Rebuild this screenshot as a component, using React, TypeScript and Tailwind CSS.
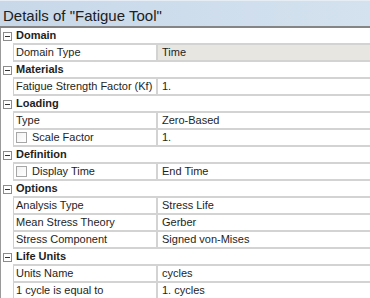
import React from 'react'

type Row =
  | { kind: 'cat'; label: string }
  | { kind: 'prop'; label: string; value: string; check?: boolean; readOnly?: boolean }

const rows: Row[] = [
  { kind: 'cat', label: 'Domain' },
  { kind: 'prop', label: 'Domain Type', value: 'Time', readOnly: true },
  { kind: 'cat', label: 'Materials' },
  { kind: 'prop', label: 'Fatigue Strength Factor (Kf)', value: '1.' },
  { kind: 'cat', label: 'Loading' },
  { kind: 'prop', label: 'Type', value: 'Zero-Based' },
  { kind: 'prop', label: 'Scale Factor', value: '1.', check: true },
  { kind: 'cat', label: 'Definition' },
  { kind: 'prop', label: 'Display Time', value: 'End Time', check: true },
  { kind: 'cat', label: 'Options' },
  { kind: 'prop', label: 'Analysis Type', value: 'Stress Life' },
  { kind: 'prop', label: 'Mean Stress Theory', value: 'Gerber' },
  { kind: 'prop', label: 'Stress Component', value: 'Signed von-Mises' },
  { kind: 'cat', label: 'Life Units' },
  { kind: 'prop', label: 'Units Name', value: 'cycles' },
  { kind: 'prop', label: '1 cycle is equal to', value: '1. cycles' },
]

function MinusBox() {
  return (
    <span className="flex h-[9px] w-[9px] items-center justify-center border border-[#8c8c8c] bg-white">
      <span className="h-px w-[5px] bg-[#333]" />
    </span>
  )
}

function CheckBox() {
  return <span className="mr-[5px] h-[11px] w-[11px] shrink-0 border border-[#a6a6a6] bg-gradient-to-br from-[#f2f2f2] to-white" />
}

export default function App() {
  return (
    <div
      className="h-[298px] w-[370px] overflow-hidden bg-white text-[11px] text-[#1e1e1e]"
      style={{ fontFamily: '"Liberation Sans", Arial, sans-serif' }}
    >
      <div className="flex h-[28px] items-center border-t border-[#e6edf5] border-b-2 border-b-[#858585] bg-gradient-to-r from-[#c8d8e9] to-[#d4e2ef] pl-[3px] pt-[3px] text-[15px] leading-none text-[#202020]">
        Details of "Fatigue Tool"
      </div>
      <div className="border-l border-[#9a9a9a]">
        {rows.map((r, i) => (
          <div key={i} className="flex h-[17px]">
            <div className="flex w-[12px] shrink-0 items-center justify-center">
              {r.kind === 'cat' && <MinusBox />}
            </div>
            {r.kind === 'cat' ? (
              <div className="flex flex-1 items-center border-b-2 border-[#d3d3d3] pl-[3px] font-bold leading-none">
                {r.label}
              </div>
            ) : (
              <div className="flex flex-1 border-b-2 border-l border-[#d3d3d3] border-l-[#cfcfcf]">
                <div className="flex w-[144px] shrink-0 items-center overflow-hidden border-r-2 border-[#d3d3d3] pl-[2px] leading-none">
                  {r.check && <CheckBox />}
                  <span className="whitespace-nowrap">{r.label}</span>
                </div>
                <div
                  className={
                    'flex flex-1 items-center pl-[4px] leading-none ' +
                    (r.readOnly ? 'bg-[#e8e6e1]' : 'bg-white')
                  }
                >
                  {r.value}
                </div>
              </div>
            )}
          </div>
        ))}
      </div>
    </div>
  )
}
